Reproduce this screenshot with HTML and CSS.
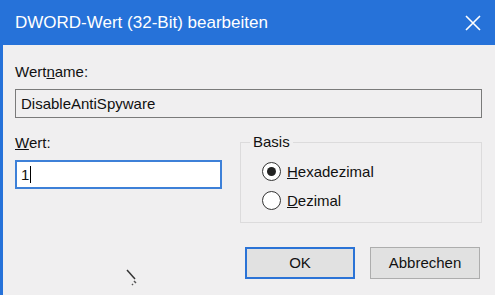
FILE: index.html
```html
<!DOCTYPE html>
<html lang="de">
<head>
    <meta charset="utf-8">
    <title>DWORD-Wert (32-Bit) bearbeiten</title>
    <link rel="stylesheet" href="styles.css">
</head>
<body>
<div class="window">
    <div class="titlebar">
        <span class="title">DWORD-Wert (32-Bit) bearbeiten</span>
        <svg class="close" width="16" height="16" viewBox="0 0 16 16">
            <path d="M1 1 L15 15 M15 1 L1 15" stroke="#fff" stroke-width="1.6" fill="none"/>
        </svg>
    </div>

    <div class="content">
        <div class="label">Wert<u>n</u>ame:</div>
        <div class="field readonly">DisableAntiSpyware</div>

        <div class="row">
            <div class="col">
                <div class="label"><u>W</u>ert:</div>
                <div class="field active">1<span class="caret"></span></div>
            </div>
            <fieldset class="group">
                <legend>Basis</legend>
                <div class="radio"><span class="dot checked"></span><span><u>H</u>exadezimal</span></div>
                <div class="radio"><span class="dot"></span><span><u>D</u>ezimal</span></div>
            </fieldset>
        </div>

        <div class="buttons">
            <div class="btn default">OK</div>
            <div class="btn">Abbrechen</div>
        </div>
    </div>

    <!-- mouse pointer left over from the capture -->
    <svg class="pointer" width="14" height="18" viewBox="0 0 14 18">
        <path d="M2 1 L10 10" stroke="#333" stroke-width="1.5"/>
        <path d="M9 12 L11 14 M7 15 L8 16" stroke="#555" stroke-width="1.5"/>
    </svg>
</div>
</body>
</html>
```

FILE: styles.css
```css
* {
    box-sizing: border-box;
}

body {
    margin: 0;
    font-family: "Liberation Sans", Arial, sans-serif;
    font-size: 15px;
    color: #111;
}

.window {
    position: relative;
    width: 495px;
    height: 295px;
    background: #f0eff0;
    overflow: hidden;
}

.titlebar {
    height: 45px;
    background: #2672d9;
    display: flex;
    align-items: center;
    justify-content: space-between;
    padding: 0 14px 0 15px;
}

.title {
    color: #fff;
    font-size: 17px;
}

.content {
    height: 250px;
    border-left: 3px solid #2672d9;
    padding: 18px 13px 0 12px;
}

.label {
    line-height: 18px;
    margin-bottom: 8px;
}

.field {
    height: 29px;
    line-height: 27px;
    padding: 0 5px;
    border: 1px solid #7a7a7a;
}

.readonly {
    background: #f0eff0;
}

.active {
    background: #fff;
    border: 2px solid #3d80d8;
    line-height: 25px;
    padding-left: 4px;
}

.caret {
    display: inline-block;
    width: 1px;
    height: 17px;
    background: #000;
    vertical-align: -3px;
    margin-left: 1px;
}

.row {
    display: grid;
    grid-template-columns: 207px 242px;
    column-gap: 18px;
    margin-top: 16px;
}

.group {
    margin: 0;
    height: 89px;
    padding: 7px 0 0 21px;
    border: 1px solid #dcdbdc;
}

.group legend {
    padding: 0 3px;
    margin-left: -12px;
    line-height: 16px;
}

.radio {
    display: flex;
    align-items: center;
    gap: 6px;
    height: 29px;
}

.dot {
    width: 19px;
    height: 19px;
    border: 1px solid #333;
    border-radius: 50%;
    background: #fff;
    display: flex;
    align-items: center;
    justify-content: center;
}

.dot.checked::after {
    content: "";
    width: 9px;
    height: 9px;
    border-radius: 50%;
    background: #222;
}

.buttons {
    display: flex;
    justify-content: flex-end;
    gap: 15px;
    margin-top: 24px;
    padding-right: 2px;
}

.btn {
    width: 110px;
    height: 32px;
    line-height: 30px;
    text-align: center;
    background: #e1e1e1;
    border: 1px solid #adadad;
}

.btn.default {
    border: 2px solid #2b73d6;
    line-height: 28px;
}

.pointer {
    position: absolute;
    left: 125px;
    top: 269px;
}
```
